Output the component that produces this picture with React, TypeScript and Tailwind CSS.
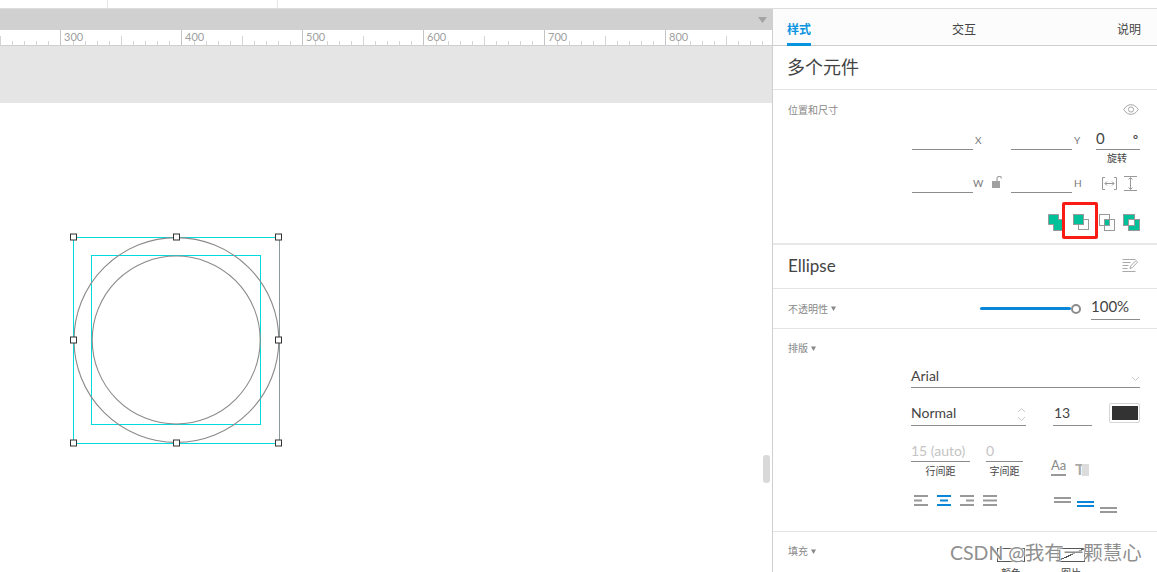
const CJK = "font-['Lato','Noto_Sans_CJK_SC',sans-serif]";

const rulerMarks = [
    { x: 60.5, label: '300' },
    { x: 181.5, label: '400' },
    { x: 302.5, label: '500' },
    { x: 423.5, label: '600' },
    { x: 544.5, label: '700' },
    { x: 665.5, label: '800' }
];

const Ruler = () => {
    const ticks: { x: number; top: number }[] = [];
    for (let i = -5; i < 65; i++) {
        const x = Math.round(60.5 + i * 12.1) + 0.5;
        if (x < 0 || x > 772 || i % 10 === 0) continue;
        ticks.push({ x, top: i % 5 === 0 ? 6 : 11 });
    }

    return (
        <svg width="772" height="16" className="block">
            {ticks.map(t => (
                <line key={t.x} x1={t.x} x2={t.x} y1={t.top} y2={15} stroke="#d4d4d4" />
            ))}
            {rulerMarks.map(m => (
                <g key={m.label}>
                    <line x1={m.x} x2={m.x} y1={0} y2={15} stroke="#c4c4c4" />
                    <text x={m.x + 3.500} y={11} fontSize="11" fill="#a0a0a0" fontFamily="Lato, sans-serif">{m.label}</text>
                </g>
            ))}
            <line x1={0} x2={772} y1={15.5} y2={15.5} stroke="#cfcfcf" />
        </svg>
    );
};

const handles = [
    [73.5, 134], [176.5, 134], [278.5, 134],
    [73.5, 237], [278.5, 237],
    [73.5, 340], [176.5, 340], [278.5, 340]
];

const Selection = () => (
    <svg width="300" height="360" className="absolute left-0 top-0">
        <rect x={73.5} y={134.5} width={206} height={206} fill="none" stroke="#00dcdc" />
        <line x1={279.5} x2={279.5} y1={135} y2={340} stroke="#8a9a9a" />
        <rect x={91.5} y={152.5} width={169} height={169} fill="none" stroke="#00dcdc" />
        <circle cx={176.4} cy={237} r={102.4} fill="none" stroke="#8a8a8a" strokeWidth="1.1" />
        <circle cx={176.2} cy={237} r={84} fill="none" stroke="#8a8a8a" strokeWidth="1.1" />
        {handles.map(([x, y]) => (
            <rect key={`${x}-${y}`} x={x - 3} y={y - 3} width={6} height={6} fill="#fff" stroke="#333" />
        ))}
    </svg>
);

const Field = ({ width }: { width: string }) => (
    <div className={`${width} h-[20px] border-b border-[#8c8c8c]`} />
);

const Eye = () => (
    <svg width="16" height="11" viewBox="0 0 16 11" fill="none" stroke="#a8a8a8">
        <path d="M.7 5.5C3 2 5.3.7 8 .7s5 1.3 7.3 4.8C13 9 10.7 10.3 8 10.3S3 9 .7 5.5z" />
        <circle cx="8" cy="5.5" r="2.6" />
    </svg>
);

const Unlock = () => (
    <svg width="11" height="12" viewBox="0 0 11 12">
        <rect x="0" y="5" width="8" height="7" fill="#a0a0a0" />
        <path d="M5 5V3a2 2 0 0 1 4.5-.6" fill="none" stroke="#a0a0a0" strokeWidth="1.2" />
    </svg>
);

const FitWidth = () => (
    <svg width="15" height="15" viewBox="0 0 15 15" fill="none" stroke="#999">
        <path d="M3 1.5H.5v12H3M12 1.5h2.5v12H12M3 7.5h9" />
        <path d="M5 5.500l-2 2 2 2M10 5.500l2 2-2 2" />
    </svg>
);

const FitHeight = () => (
    <svg width="15" height="15" viewBox="0 0 15 15" fill="none" stroke="#999">
        <path d="M1 .5h13M1 14.5h13M7.5 2v11" />
        <path d="M5.500 3.500l2-2 2 2M5.500 11.500l2 2 2-2" />
    </svg>
);

const Union = () => (
    <svg width="17" height="17" viewBox="0 0 17 17">
        <path d="M.5.5h10v5h6v11h-11v-6h-5z" fill="#00c19a" stroke="#999" />
    </svg>
);

const Subtract = () => (
    <svg width="17" height="17" viewBox="0 0 17 17" fill="none" stroke="#999">
        <rect x="5.5" y="5.5" width="10" height="10" fill="#fff" />
        <rect x=".5" y=".5" width="10" height="10" fill="#00c19a" />
    </svg>
);

const Intersect = () => (
    <svg width="16" height="17" viewBox="0 0 16 17" fill="none" stroke="#999">
        <rect x=".5" y=".5" width="10" height="11" />
        <rect x="5.5" y="5.5" width="10" height="11" />
        <rect x="6" y="6" width="4" height="5" fill="#00c19a" stroke="none" />
    </svg>
);

const Exclude = () => (
    <svg width="17" height="17" viewBox="0 0 17 17">
        <rect x=".5" y=".5" width="11" height="11" fill="#00c19a" stroke="#999" />
        <rect x="5.5" y="5.5" width="11" height="11" fill="#00c19a" stroke="#999" />
        <rect x="5.5" y="5.5" width="6" height="6" fill="#fff" stroke="#999" />
    </svg>
);

const NoteEdit = () => (
    <svg width="16" height="13" viewBox="0 0 16 13" fill="none" stroke="#aaa">
        <path d="M.5.5h13M.5 3.500h8M.5 6.500h6M.5 9.500h5M.5 12.500h13" />
        <path d="M8 9.500l.6-2.400 5.400-5.600 1.600 1.600-5.400 5.600z" />
    </svg>
);

const AlignLines = ({ rows, color }: { rows: [number, number][]; color: string }) => (
    <svg width="15" height="12" viewBox="0 0 15 12" fill={color}>
        {rows.map(([x, w], i) => (
            <rect key={i} x={x} y={i * 4.5} width={w} height="2" />
        ))}
    </svg>
);

const ValignLines = ({ color }: { color: string }) => (
    <svg width="17" height="6" viewBox="0 0 17 6" fill={color}>
        <rect width="17" height="2" />
        <rect y="4" width="17" height="2" />
    </svg>
);

const SectionLabel = ({ children }: { children: string }) => (
    <span className="flex items-center gap-[3px] text-[10px] leading-[14px] text-[#888]">
        {children}
        <svg width="5" height="5" viewBox="0 0 5 5" fill="#888"><path d="M0 .5h5L2.500 5z" /></svg>
    </span>
);

export default function App() {
    return (
        <div className={`relative flex h-[572px] w-[1157px] flex-col overflow-hidden bg-white ${CJK}`}>
            <div className="flex h-[9px] shrink-0 border-b border-[#dddddd]">
                <div className="w-[108px] border-r border-[#e6e6e6]" />
                <div className="w-[170px] border-r border-[#e6e6e6]" />
            </div>
            <div className="flex min-h-0 flex-1">
                <div className="flex w-[772px] shrink-0 flex-col">
                    <div className="flex h-[21px] shrink-0 items-center justify-end bg-[#d0d0d0] pr-[5px]">
                        <svg width="9" height="6" viewBox="0 0 9 6" fill="#a3a3a3"><path d="M0 0h9L4.500 6z" /></svg>
                    </div>
                    <Ruler />
                    <div className="h-[57px] shrink-0 bg-[#e5e5e5]" />
                    <div className="relative flex-1">
                        <Selection />
                        <div className="absolute left-[763px] top-[352px] h-[28px] w-[7px] rounded-[3px] bg-[#d9d9d9]" />
                    </div>
                </div>
                <aside className="flex w-[385px] shrink-0 flex-col border-l border-[#cfcfcf] text-[#444]">
                    <div className="flex h-[37px] shrink-0 items-end justify-between border-b border-[#cfcfcf] bg-[#fcfcfc] pl-[14px] pr-[16px] text-[12px]">
                        <span className="-mb-px border-b-[3px] border-[#0a94e0] pb-[6px] font-bold leading-[15px] text-[#0a94e0]">样式</span>
                        <span className="pb-[8px] leading-[15px]">交互</span>
                        <span className="pb-[8px] leading-[15px]">说明</span>
                    </div>

                    <div className="flex h-[44px] shrink-0 items-center border-b border-[#e4e4e4] pl-[14px] text-[18px]">多个元件</div>

                    <section className="relative flex h-[155px] shrink-0 flex-col border-b-2 border-[#e8e8e8] pl-[15px] pr-[17px]">
                        <div className="flex items-center justify-between pt-[13px]">
                            <span className="text-[10px] leading-[14px] text-[#888]">位置和尺寸</span>
                            <span className="-mt-[1px] mr-[1px]"><Eye /></span>
                        </div>
                        <div className="mt-[12px] flex items-end pl-[124px] text-[10px] text-[#777]">
                            <Field width="w-[61px]" />
                            <span className="ml-[2px] w-[36px] pb-[4px] leading-[11px]">X</span>
                            <Field width="w-[61px]" />
                            <span className="ml-[2px] w-[22px] pb-[4px] leading-[11px]">Y</span>
                            <div className="relative flex w-[44px] justify-between border-b border-[#8c8c8c] pb-[1px] text-[15px] leading-[19px] text-[#444]">
                                <span>0</span><span className="pr-[2px] text-[12px] font-bold">°</span>
                            </div>
                        </div>
                        <div className="flex justify-end pr-[13px] pt-[2px] text-[10px] leading-[13px]">旋转</div>
                        <div className="mt-[8px] flex items-end pl-[124px] text-[10px] text-[#777]">
                            <Field width="w-[61px]" />
                            <span className="w-[19px] pb-[4px] leading-[11px]">W</span>
                            <span className="mt-[3px] w-[19px] self-start"><Unlock /></span>
                            <Field width="w-[61px]" />
                            <span className="ml-[2px] w-[28px] pb-[4px] leading-[11px]">H</span>
                            <span className="mb-[2px] flex w-[36px] items-center justify-between"><FitWidth /><FitHeight /></span>
                        </div>
                        <div className="mt-[21px] flex items-center justify-end">
                            <Union />
                            <span className="ml-[8px] flex"><Subtract /></span>
                            <span className="ml-[9px] flex"><Intersect /></span>
                            <span className="ml-[8px] flex"><Exclude /></span>
                        </div>
                        <div className="absolute left-[289px] top-[112px] h-[37px] w-[36px] rounded-[2px] border-[3px] border-[#fa1c14]" />
                    </section>

                    <div className="flex h-[44px] shrink-0 items-center justify-between border-b border-[#e4e4e4] pb-[2px] pl-[15px] pr-[19px] text-[17px]">
                        Ellipse <NoteEdit />
                    </div>

                    <div className="flex h-[40px] shrink-0 items-center border-b border-[#e4e4e4] pl-[15px] pr-[17px]">
                        <SectionLabel>不透明性</SectionLabel>
                        <div className="ml-auto flex items-center">
                            <div className="h-[3px] w-[91px] rounded-full bg-[#0a86d8]" />
                            <div className="h-[10px] w-[10px] rounded-full border-2 border-[#8c8c8c] bg-white" />
                        </div>
                        <div className="ml-[10px] h-[23px] w-[49px] border-b border-[#8c8c8c] text-[15px] leading-[18px]">100%</div>
                    </div>

                    <section className="flex h-[203px] shrink-0 flex-col border-b border-[#e4e4e4] pl-[15px] pr-[17px]">
                        <div className="pt-[12px]"><SectionLabel>排版</SectionLabel></div>
                        <div className="ml-[123px] mt-[10px] flex h-[23px] items-center justify-between border-b border-[#8c8c8c] pb-[2px] text-[14px]">
                            Arial
                            <svg width="9" height="6" viewBox="0 0 9 6" fill="none" stroke="#c8c8c8" className="mt-[7px]"><path d="M1 1l3.500 3.500L8 1" /></svg>
                        </div>
                        <div className="ml-[123px] mt-[16px] flex items-end">
                            <div className="flex h-[22px] w-[115px] items-center justify-between border-b border-[#8c8c8c] text-[14px]">
                                <span className="pb-[4px]">Normal</span>
                                <svg width="9" height="15" viewBox="0 0 9 15" fill="none" stroke="#c8c8c8"><path d="M1 5l3.500-3.500L8 5M1 10l3.500 3.500L8 10" /></svg>
                            </div>
                            <div className="ml-[27px] flex h-[22px] w-[39px] items-center border-b border-[#8c8c8c] pb-[4px] pl-[1px] text-[14px]">13</div>
                            <div className="ml-[17px] -mt-[1px] flex h-[20px] w-[31px] items-center justify-center self-start rounded-[2px] border border-[#d5d5d5]">
                                <div className="h-[14px] w-[26px] bg-[#333]" />
                            </div>
                        </div>
                        <div className="ml-[123px] mt-[15px] flex">
                            <div className="w-[59px]">
                                <div className="h-[21px] border-b border-[#8c8c8c] pt-[1px] text-[14px] leading-[18px] text-[#c4c4c4]">15 (auto)</div>
                                <div className="pt-[3px] text-center text-[10px] leading-[13px]">行间距</div>
                            </div>
                            <div className="ml-[16px] w-[37px]">
                                <div className="h-[21px] border-b border-[#8c8c8c] pt-[1px] text-[14px] leading-[18px] text-[#c4c4c4]">0</div>
                                <div className="pt-[3px] text-center text-[10px] leading-[13px]">字间距</div>
                            </div>
                            <div className="ml-[28px] mt-[15px] flex h-[20px] w-[15px] justify-center border-b-2 border-[#999] text-[13px] leading-[18px] text-[#888]">Aa</div>
                            <div className="relative ml-[9px] mt-[20px] h-[16px] w-[15px] text-[16px] font-bold leading-[15px] text-[#aaa]">
                                T
                                <span className="absolute left-[7px] top-[3px] h-[12px] w-[7px] bg-[#dcdcdc]" />
                            </div>
                        </div>
                        <div className="ml-[126px] mt-[17px] flex h-[22px] items-start">
                            <div className="flex gap-[8px]">
                                <AlignLines color="#999" rows={[[0, 14], [0, 8], [0, 14]]} />
                                <AlignLines color="#0a86d8" rows={[[0, 14], [3, 8], [0, 14]]} />
                                <AlignLines color="#999" rows={[[0, 14], [6, 8], [0, 14]]} />
                                <AlignLines color="#999" rows={[[0, 14], [0, 14], [0, 14]]} />
                            </div>
                            <div className="ml-[56px] mt-[2px] flex gap-[6px]">
                                <ValignLines color="#999" />
                                <span className="mt-[4px] flex"><ValignLines color="#0a86d8" /></span>
                                <span className="mt-[10px] flex"><ValignLines color="#999" /></span>
                            </div>
                        </div>
                    </section>

                    <section className="flex flex-1 items-start pl-[15px] pt-[12px]">
                        <SectionLabel>填充</SectionLabel>
                        <div className="ml-[181px] mt-[4px] flex gap-[32px]">
                            <div className="w-[28px]">
                                <div className="h-[14px] border border-[#555]" />
                                <div className="pt-[4px] text-center text-[10px]">颜色</div>
                            </div>
                            <div className="w-[28px]">
                                <div className="h-[14px] border border-[#555] bg-[linear-gradient(to_top_left,transparent_48%,#555_48%,#555_54%,transparent_54%)]" />
                                <div className="pt-[4px] text-center text-[10px]">图片</div>
                            </div>
                        </div>
                    </section>
                </aside>
            </div>
            <div className="absolute left-[950px] top-[541px] text-[19.5px] leading-[24px] text-[#8f8f8f] [text-shadow:0_0_2px_#fff,0_0_2px_#fff,0_0_2px_#fff]">
                CSDN @我有一颗慧心
            </div>
        </div>
    );
}
